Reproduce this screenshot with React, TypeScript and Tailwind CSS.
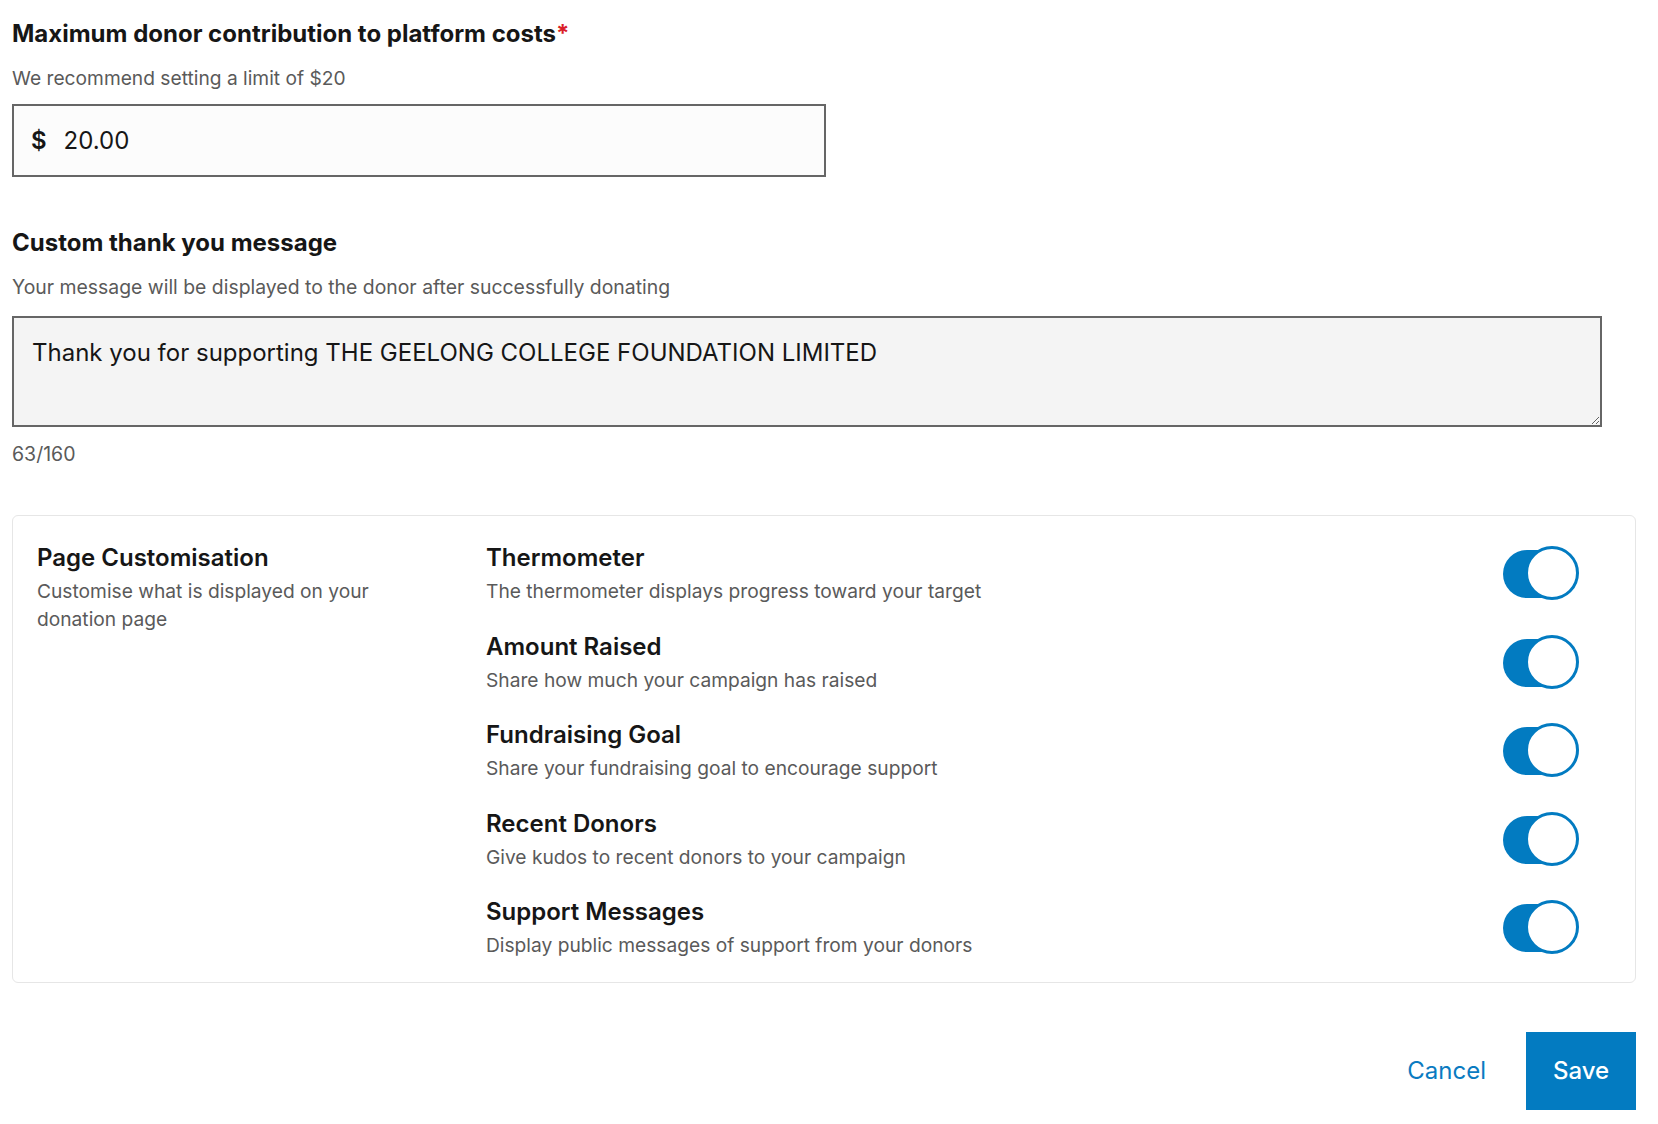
import React from "react";

const rows = [
  { title: "Thermometer", desc: "The thermometer displays progress toward your target" },
  { title: "Amount Raised", desc: "Share how much your campaign has raised" },
  { title: "Fundraising Goal", desc: "Share your fundraising goal to encourage support" },
  { title: "Recent Donors", desc: "Give kudos to recent donors to your campaign" },
  { title: "Support Messages", desc: "Display public messages of support from your donors" },
];

function Toggle() {
  return (
    <div className="relative w-[76px] h-[56px] shrink-0">
      <div className="absolute left-0 top-[4px] w-[72px] h-[48px] rounded-full bg-[#027bc1]" />
      <div className="absolute right-0 top-0 w-[54px] h-[54px] rounded-full bg-white border-[3px] border-[#027bc1]" />
    </div>
  );
}

export default function App() {
  return (
    <div className="w-[1658px] min-h-[1124px] bg-white font-['Inter','Noto_Sans',sans-serif] text-[#161616]">
      <div className="ml-[12px] w-[1624px] pt-[18px] pb-[13px]">
        <h2 className="text-[24px] leading-[32px] font-bold text-[#161616]">
          Maximum donor contribution to platform costs<span className="text-[#da1e28]">*</span>
        </h2>
        <p className="mt-[14px] text-[19.2px] leading-[28px] text-[#5a5a5a]">We recommend setting a limit of $20</p>
        <div className="mt-[12px] w-[814px] h-[73px] border-2 border-[#666666] bg-[#fcfcfc] flex items-center pl-[17px]">
          <span className="text-[24px] font-semibold text-[#161616]">$</span>
          <span className="ml-[17px] text-[24px] text-[#161616]">20.00</span>
        </div>

        <h2 className="mt-[50px] text-[24px] leading-[32px] font-bold text-[#161616]">Custom thank you message</h2>
        <p className="mt-[14px] text-[19.4px] leading-[28px] text-[#5a5a5a]">
          Your message will be displayed to the donor after successfully donating
        </p>
        <textarea
          className="mt-[15px] block w-[1590px] h-[111px] border-2 border-[#666666] bg-[#f4f4f4] pt-[19px] px-[18px] text-[24px] leading-[32px] text-[#161616] font-['Inter',sans-serif] outline-none"
          defaultValue="Thank you for supporting THE GEELONG COLLEGE FOUNDATION LIMITED"
        />
        <p className="mt-[13px] text-[19.5px] leading-[28px] text-[#5a5a5a]">63/160</p>

        <div className="mt-[47px] border border-[#e6e6e6] rounded-[6px] flex pl-[24px] pr-[56px] pt-[27px] pb-[23px]">
          <div className="w-[449px] shrink-0">
            <h3 className="text-[24px] leading-[30px] font-semibold text-[#161616]">Page Customisation</h3>
            <p className="mt-[4px] max-w-[370px] text-[19.2px] leading-[28px] text-[#5a5a5a]">
              Customise what is displayed on your donation page
            </p>
          </div>
          <div className="flex-1 flex flex-col gap-[26.5px]">
            {rows.map((r) => (
              <div key={r.title} className="flex items-center justify-between">
                <div>
                  <h3 className="text-[24px] leading-[30px] font-semibold text-[#161616]">{r.title}</h3>
                  <p className="mt-[4px] text-[19.2px] leading-[28px] text-[#5a5a5a]">{r.desc}</p>
                </div>
                <Toggle />
              </div>
            ))}
          </div>
        </div>

        <div className="mt-[49px] flex justify-end items-center">
          <button className="text-[24px] leading-[32px] text-[#0a7bc1] mr-[40px]">Cancel</button>
          <button className="w-[110px] h-[78px] bg-[#037bc1] text-white text-[24px] font-medium">Save</button>
        </div>
      </div>
    </div>
  );
}
